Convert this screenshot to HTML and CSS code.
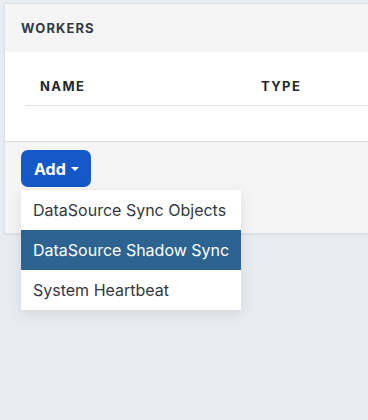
FILE: index.html
```html
<!DOCTYPE html>
<html lang="en">
<head>
    <meta charset="UTF-8">
    <meta name="viewport" content="width=device-width, initial-scale=1.0">
    <title>Workers</title>
    <link rel="stylesheet" href="styles.css">
</head>
<body>
    <div class="card">
        <div class="card-header">Workers</div>
        <div class="card-body">
            <table class="workers-table">
                <thead>
                    <tr>
                        <th class="col-name">Name</th>
                        <th>Type</th>
                    </tr>
                </thead>
                <tbody></tbody>
            </table>
        </div>
        <div class="card-footer">
            <div class="dropdown">
                <button class="add-btn">Add <span class="caret"></span></button>
                <ul class="dropdown-menu">
                    <li>DataSource Sync Objects</li>
                    <li class="active">DataSource Shadow Sync</li>
                    <li>System Heartbeat</li>
                </ul>
            </div>
        </div>
    </div>
</body>
</html>
```

FILE: styles.css
```css
* {
    margin: 0;
    padding: 0;
    box-sizing: border-box;
}

body {
    font-family: Inter, "Noto Sans", sans-serif;
    background: #e9edf1;
    min-height: 100vh;
    padding: 3px 0 0 4px;
    overflow: hidden;
}

.card {
    width: 100%;
    background: #f5f5f5;
    border: 1px solid #dcdfe3;
    border-right: none;
    box-shadow: 0 1px 2px rgba(0, 0, 0, 0.06);
}

.card-header {
    height: 48px;
    padding: 0 16px;
    display: flex;
    align-items: center;
    font-size: 13px;
    font-weight: 700;
    letter-spacing: 1.1px;
    text-transform: uppercase;
    color: #333a42;
}

.card-body {
    background: white;
    height: 90px;
    padding: 17px 0 0 20px;
    border-bottom: 1px solid #d8dadd;
}

.workers-table {
    width: 100%;
    border-collapse: collapse;
}

.workers-table th {
    text-align: left;
    font-size: 13px;
    font-weight: 700;
    letter-spacing: 1.4px;
    text-transform: uppercase;
    color: #24282d;
    padding: 9px 15px 11px;
    border-bottom: 1px solid #dee1e4;
}

.workers-table .col-name {
    width: 221px;
}

.card-footer {
    height: 91px;
    padding: 8px 16px;
}

.dropdown {
    position: relative;
    display: inline-block;
}

.add-btn {
    display: flex;
    align-items: center;
    gap: 5px;
    height: 37px;
    padding: 0 12px 0 13px;
    background: #1558c8;
    color: white;
    border: none;
    border-radius: 7px;
    font-family: inherit;
    font-size: 16px;
    font-weight: 700;
    cursor: pointer;
}

.caret {
    width: 0;
    height: 0;
    border-left: 4px solid transparent;
    border-right: 4px solid transparent;
    border-top: 4px solid white;
}

.dropdown-menu {
    position: absolute;
    top: 40px;
    left: 0;
    width: 220px;
    list-style: none;
    background: white;
    box-shadow: 0 4px 14px rgba(0, 0, 0, 0.1);
}

.dropdown-menu li {
    height: 40px;
    padding: 0 12px;
    display: flex;
    align-items: center;
    font-size: 16px;
    color: #33383e;
    white-space: nowrap;
}

.dropdown-menu li.active {
    background: #2c6390;
    color: white;
}
```
